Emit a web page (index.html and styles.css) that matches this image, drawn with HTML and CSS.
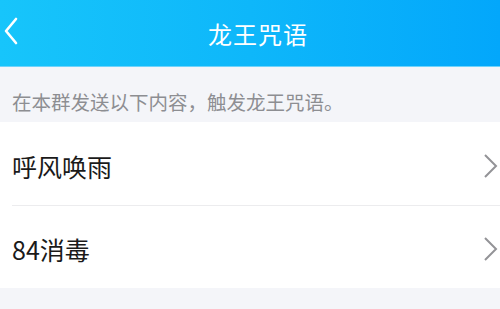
FILE: index.html
```html
<!DOCTYPE html>
<html lang="zh">
<head>
<meta charset="utf-8">
<link rel="stylesheet" href="styles.css">
</head>
<body>
<div class="page">
  <header class="nav">
    <svg class="back" width="14" height="28" viewBox="0 0 14 28"><path d="M12 2 L2 14 L12 26" fill="none" stroke="#fff" stroke-width="2.6" stroke-linecap="round" stroke-linejoin="round"/></svg>
    <div class="title">龙王咒语</div>
  </header>
  <div class="caption">在本群发送以下内容，触发龙王咒语。</div>
  <div class="list">
    <div class="row">
      <span class="label">呼风唤雨</span>
      <svg class="chev" width="15" height="26" viewBox="0 0 15 26"><path d="M2 2 L13 13 L2 24" fill="none" stroke="#939397" stroke-width="2"/></svg>
    </div>
    <div class="row">
      <span class="label">84消毒</span>
      <svg class="chev" width="15" height="26" viewBox="0 0 15 26"><path d="M2 2 L13 13 L2 24" fill="none" stroke="#939397" stroke-width="2"/></svg>
    </div>
  </div>
</div>
</body>
</html>
```
FILE: styles.css
```css
html, body {
  margin: 0;
  padding: 0;
  background: #f4f5f9;
}
.page {
  width: 500px;
  height: 309px;
  overflow: hidden;
  font-family: "Noto Sans CJK SC", "Noto Sans", sans-serif;
}
.nav {
  position: relative;
  height: 66px;
  background: linear-gradient(90deg, #17c5fb 0%, #0eb7fa 50%, #03a7fb 100%);
  border-bottom: 1px solid #6fd3fb;
  display: flex;
  align-items: center;
  justify-content: center;
}
.back {
  position: absolute;
  left: 4px;
  top: 17px;
}
.title {
  color: #fff;
  font-size: 24px;
  margin-left: 16px;
  letter-spacing: 1px;
}
.caption {
  height: 55px;
  box-sizing: border-box;
  padding: 22px 0 0 12px;
  font-size: 19.5px;
  line-height: 26px;
  color: #8d8e92;
}
.list {
  background: #fff;
}
.row {
  height: 83px;
  display: flex;
  align-items: center;
  justify-content: space-between;
  padding: 0 2px 0 12px;
  position: relative;
}
.row + .row::before {
  content: "";
  position: absolute;
  left: 12px;
  right: 0;
  top: 0;
  height: 1px;
  background: #ececee;
}
.label {
  font-size: 25px;
  color: #1a1a1a;
  padding-top: 5px;
}
.chev {
  margin-top: 4px;
}
```
